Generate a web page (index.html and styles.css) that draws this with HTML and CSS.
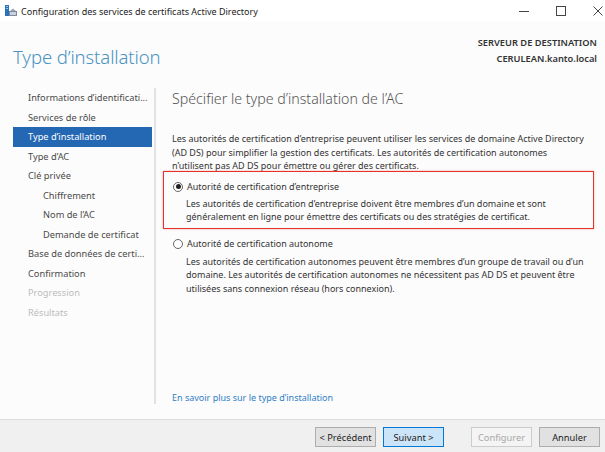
FILE: index.html
```html
<!DOCTYPE html>
<html lang="fr">
<head>
<meta charset="utf-8">
<link rel="stylesheet" href="styles.css">
</head>
<body>
<div class="window">
  <div class="titlebar">
    <svg class="appicon" width="12" height="12" viewBox="0 0 12 12">
      <rect x="0" y="0" width="4" height="11" fill="#2a72c0"/>
      <rect x="1" y="1" width="2" height="1" fill="#9cc4ea"/>
      <rect x="1" y="3" width="2" height="1" fill="#9cc4ea"/>
      <rect x="4" y="6" width="8" height="5" fill="#7d8a99"/>
      <rect x="5" y="7" width="6" height="3" fill="#c9d2dc"/>
      <path d="M5 6 L8 3.5 L11 6 Z" fill="#9aa6b3"/>
    </svg>
    <span class="title">Configuration des services de certificats Active Directory</span>
    <div class="controls">
      <svg width="12" height="12" viewBox="0 0 12 12"><line x1="1" y1="6.5" x2="11" y2="6.5" stroke="#444" stroke-width="1"/></svg>
      <svg width="12" height="12" viewBox="0 0 12 12"><rect x="1.5" y="1.5" width="9" height="9" fill="none" stroke="#444" stroke-width="1"/></svg>
      <svg width="12" height="12" viewBox="0 0 12 12"><path d="M1.5 1.5 L10.5 10.5 M10.5 1.5 L1.5 10.5" stroke="#444" stroke-width="1"/></svg>
    </div>
  </div>
  <div class="header">
    <h1 class="pagetitle">Type d’installation</h1>
    <div class="dest">
      <div>SERVEUR DE DESTINATION</div>
      <div>CERULEAN.kanto.local</div>
    </div>
  </div>
  <div class="main">
    <ul class="nav">
      <li>Informations d’identificati...</li>
      <li>Services de rôle</li>
      <li class="active">Type d’installation</li>
      <li>Type d’AC</li>
      <li>Clé privée</li>
      <li class="sub">Chiffrement</li>
      <li class="sub">Nom de l’AC</li>
      <li class="sub">Demande de certificat</li>
      <li>Base de données de certi...</li>
      <li>Confirmation</li>
      <li class="disabled">Progression</li>
      <li class="disabled">Résultats</li>
    </ul>
    <div class="content">
      <h2 class="heading">Spécifier le type d’installation de l’AC</h2>
      <p class="intro">Les autorités de certification d’entreprise peuvent utiliser les services de domaine Active Directory<br>(AD DS) pour simplifier la gestion des certificats. Les autorités de certification autonomes<br>n’utilisent pas AD DS pour émettre ou gérer des certificats.</p>
      <div class="option highlight">
        <div class="radio-row"><span class="radio checked"></span><span>Autorité de certification d’entreprise</span></div>
        <p class="desc">Les autorités de certification d’entreprise doivent être membres d’un domaine et sont<br>généralement en ligne pour émettre des certificats ou des stratégies de certificat.</p>
      </div>
      <div class="option second">
        <div class="radio-row"><span class="radio"></span><span>Autorité de certification autonome</span></div>
        <p class="desc">Les autorités de certification autonomes peuvent être membres d’un groupe de travail ou d’un<br>domaine. Les autorités de certification autonomes ne nécessitent pas AD DS et peuvent être<br>utilisées sans connexion réseau (hors connexion).</p>
      </div>
      <div class="spacer"></div>
      <a class="link">En savoir plus sur le type d’installation</a>
    </div>
  </div>
  <div class="footer">
    <button class="btn">&lt; Précédent</button>
    <button class="btn primary">Suivant &gt;</button>
    <button class="btn disabled gap">Configurer</button>
    <button class="btn">Annuler</button>
  </div>
</div>
</body>
</html>
```
FILE: styles.css
```css
* { box-sizing: border-box; }
html, body { margin: 0; padding: 0; }
body {
  width: 605px;
  height: 452px;
  overflow: hidden;
  font-family: "Noto Sans", "Open Sans", sans-serif;
  color: #333;
  background: #fcfcfc;
}
.window {
  width: 605px;
  height: 452px;
  display: flex;
  flex-direction: column;
}
.titlebar {
  height: 22px;
  background: #ffffff;
  display: flex;
  align-items: center;
  padding-left: 5px;
}
.appicon { margin-right: 4px; margin-top: -1px; }
.title {
  font-size: 9px;
  color: #222;
}
.controls {
  margin-left: auto;
  display: flex;
  gap: 25px;
  padding-right: 1px;
}
.header {
  height: 66px;
  display: flex;
  justify-content: space-between;
  padding: 0 8px 0 13px;
}
.pagetitle {
  margin: 22px 0 0 0;
  font-size: 18.5px;
  font-weight: 300;
  color: #4a93c2;
  letter-spacing: -0.1px;
}
.dest {
  margin-top: 13px;
  text-align: right;
  font-size: 9.3px;
  font-weight: 600;
  color: #333;
  line-height: 16px;
}
.main {
  height: 316px;
  display: flex;
}
.nav {
  list-style: none;
  margin: 0;
  padding: 0;
  width: 156px;
  border-right: 2px solid #e2e2e2;
  font-size: 9.25px;
  color: #4a4a4a;
}
.nav li {
  height: 19.5px;
  line-height: 19.5px;
  margin-left: 13px;
  margin-right: 2px;
  padding-left: 15px;
  white-space: nowrap;
}
.nav li.sub { padding-left: 30px; }
.nav li.active {
  background: #2467b3;
  color: #fff;
}
.nav li.disabled { color: #bdbdbd; }
.content {
  flex: 1;
  padding: 0 11px 0 16px;
  display: flex;
  flex-direction: column;
  font-size: 9px;
  white-space: nowrap;
}
.heading {
  margin: 0;
  padding-top: 1px;
  font-size: 14.2px;
  font-weight: 300;
  color: #555;
  line-height: 20px;
}
.intro {
  margin: 23px 0 0 0;
  line-height: 13.5px;
  color: #333;
}
.option {
  margin: 0 0 0 -9px;
  padding: 3px 6px 3px 9px;
  border: 1.5px solid transparent;
}
.option.highlight {
  border-color: #e5332a;
  box-shadow: 0 0 2px rgba(229, 51, 42, 0.4);
  margin-top: -2px;
  padding-top: 6px;
  padding-bottom: 4px;
}
.option.highlight .desc { margin-top: 1px; }
.option.second { margin-top: 2px; }
.radio-row {
  display: flex;
  align-items: center;
  height: 18px;
  gap: 4px;
}
.radio {
  width: 10px;
  height: 10px;
  border: 1px solid #666;
  border-radius: 50%;
  display: flex;
  align-items: center;
  justify-content: center;
  background: #fff;
}
.radio.checked::after {
  content: "";
  width: 5px;
  height: 5px;
  border-radius: 50%;
  background: #222;
}
.desc {
  margin: 2px 0 0 0;
  padding-left: 13px;
  line-height: 13.5px;
  color: #333;
}
.spacer { flex: 1; }
.link {
  color: #2f80c8;
  margin-bottom: -1px;
  line-height: 14px;
  cursor: pointer;
}
.footer {
  margin-top: auto;
  height: 33px;
  border-top: 1px solid #dedede;
  background: #f0f0f0;
  display: flex;
  align-items: center;
  justify-content: flex-end;
  padding-right: 5px;
  padding-top: 2px;
  gap: 7px;
}
.btn {
  font-family: inherit;
  font-size: 9.3px;
  height: 20px;
  width: 61px;
  padding: 0;
  border: 1px solid #adadad;
  background: #e1e1e1;
  color: #222;
}
.btn.primary {
  border-color: #0078d7;
  background: #cce4f7;
}
.btn.disabled {
  color: #a8a8a8;
  border-color: #cccccc;
  background: #f4f4f4;
}
.btn.gap { margin-left: 20px; }
```
